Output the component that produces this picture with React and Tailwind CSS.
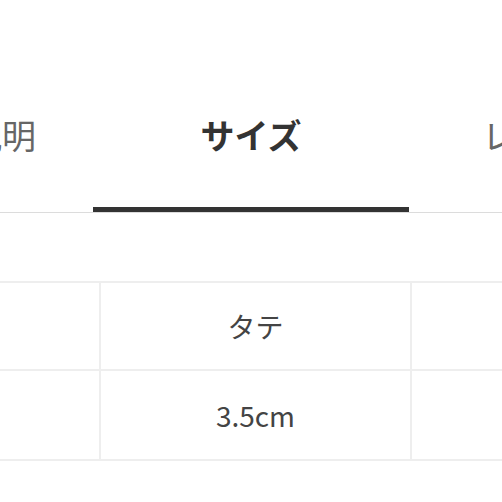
const jp = "font-['Noto_Sans_CJK_JP','Noto_Sans',sans-serif]"

function Tabs() {
  return (
    <div className="flex border-b border-[#dcdcdc] pt-[118px]">
      <div className="flex w-[93px] shrink-0 justify-end overflow-hidden border-b-[5px] border-transparent pb-[55px] pr-[57px]">
        <span className="whitespace-nowrap text-[34px] leading-[34px] text-[#666]">商品説明</span>
      </div>
      <div className="flex w-[316px] shrink-0 justify-center border-b-[5px] border-[#333] pb-[55px]">
        <span className="whitespace-nowrap text-[34px] font-bold leading-[34px] text-[#333]">サイズ</span>
      </div>
      <div className="flex min-w-0 flex-1 overflow-hidden border-b-[5px] border-transparent pb-[55px] pl-[73px]">
        <span className="whitespace-nowrap text-[34px] leading-[34px] text-[#666]">レビュー</span>
      </div>
    </div>
  )
}

function SizeTable() {
  const rows = [
    { label: '', value: 'タテ', h: 'h-[88px]' },
    { label: '', value: '3.5cm', h: 'h-[90px]' },
  ]
  return (
    <div className="mt-[68px] border-t-2 border-[#eeeeee]">
      {rows.map((r, i) => (
        <div key={i} className={`grid grid-cols-[101px_311px_1fr] border-b-2 border-[#eeeeee] ${r.h}`}>
          <div className="border-r-2 border-[#eeeeee]">{r.label}</div>
          <div className="flex items-center justify-center border-r-2 border-[#eeeeee] text-[28px] text-[#444]">
            {r.value}
          </div>
          <div />
        </div>
      ))}
    </div>
  )
}

export default function App() {
  return (
    <div className={`h-[502px] w-[502px] overflow-hidden bg-white ${jp}`}>
      <Tabs />
      <SizeTable />
    </div>
  )
}
